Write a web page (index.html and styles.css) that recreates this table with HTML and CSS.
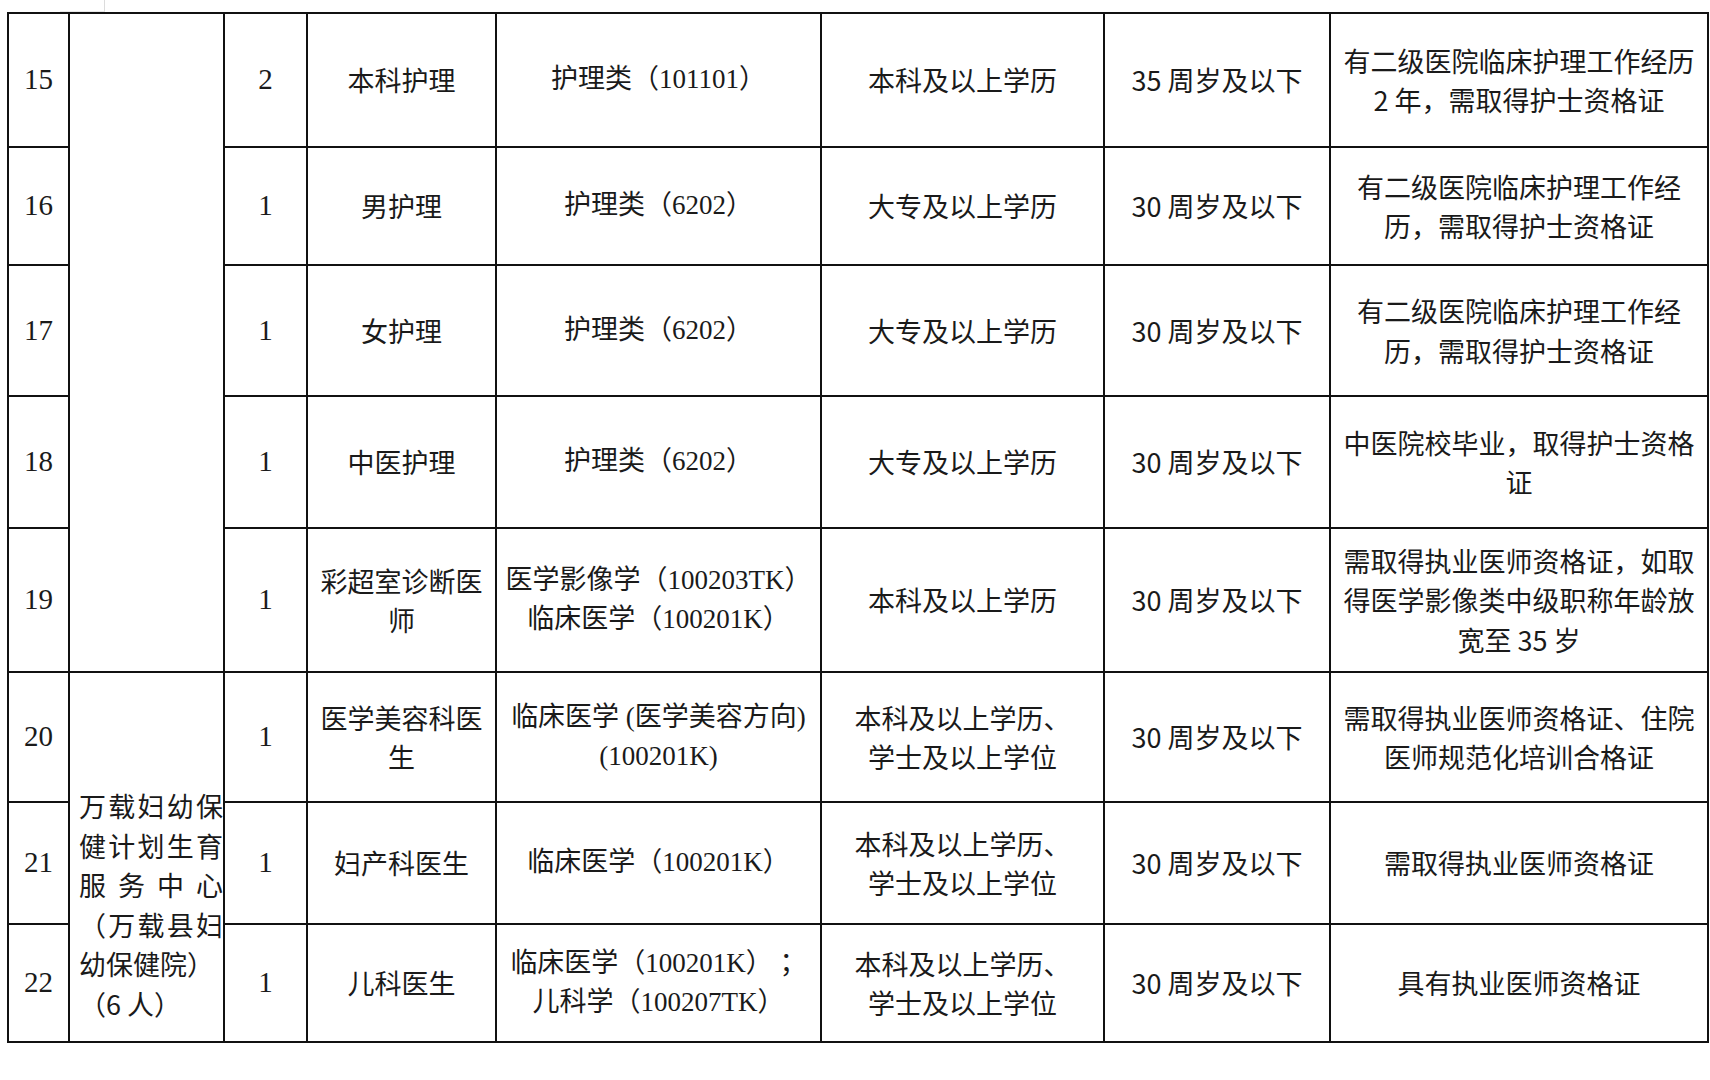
FILE: index.html
```html
<!DOCTYPE html>
<html lang="zh-CN">
<head>
<meta charset="utf-8">
<title>招聘岗位表</title>
<link rel="stylesheet" href="styles.css">
</head>
<body>
<div class="page">
  <div class="prev-corner"></div>
  <table class="grid">
    <colgroup>
      <col class="c-no">
      <col class="c-unit">
      <col class="c-count">
      <col class="c-post">
      <col class="c-major">
      <col class="c-edu">
      <col class="c-age">
      <col class="c-note">
    </colgroup>
    <tbody>
      <tr class="r15">
        <td class="num">15</td>
        <td class="unit-empty" rowspan="5"></td>
        <td class="num">2</td>
        <td>本科护理</td>
        <td class="major">护理类（101101）</td>
        <td>本科及以上学历</td>
        <td>35 周岁及以下</td>
        <td>有二级医院临床护理工作经历<br>2 年，需取得护士资格证</td>
      </tr>
      <tr class="r16">
        <td class="num">16</td>
        <td class="num">1</td>
        <td>男护理</td>
        <td class="major">护理类（6202）</td>
        <td>大专及以上学历</td>
        <td>30 周岁及以下</td>
        <td>有二级医院临床护理工作经<br>历，需取得护士资格证</td>
      </tr>
      <tr class="r17">
        <td class="num">17</td>
        <td class="num">1</td>
        <td>女护理</td>
        <td class="major">护理类（6202）</td>
        <td>大专及以上学历</td>
        <td>30 周岁及以下</td>
        <td>有二级医院临床护理工作经<br>历，需取得护士资格证</td>
      </tr>
      <tr class="r18">
        <td class="num">18</td>
        <td class="num">1</td>
        <td>中医护理</td>
        <td class="major">护理类（6202）</td>
        <td>大专及以上学历</td>
        <td>30 周岁及以下</td>
        <td>中医院校毕业，取得护士资格<br>证</td>
      </tr>
      <tr class="r19">
        <td class="num">19</td>
        <td class="num">1</td>
        <td>彩超室诊断医<br>师</td>
        <td class="major">医学影像学（100203TK）<br>临床医学（100201K）</td>
        <td>本科及以上学历</td>
        <td>30 周岁及以下</td>
        <td>需取得执业医师资格证，如取<br>得医学影像类中级职称年龄放<br>宽至 35 岁</td>
      </tr>
      <tr class="r20">
        <td class="num">20</td>
        <td class="unit" rowspan="3">
          <span class="line-just">万载妇幼保</span>
          <span class="line-just">健计划生育</span>
          <span class="line-just">服务中心</span>
          <span class="line-just">（万载县妇</span>
          <span class="line-left">幼保健院）</span>
          <span class="line-left">（6 人）</span>
        </td>
        <td class="num">1</td>
        <td>医学美容科医<br>生</td>
        <td class="major">临床医学 (医学美容方向)<br>(100201K)</td>
        <td>本科及以上学历、<br>学士及以上学位</td>
        <td>30 周岁及以下</td>
        <td>需取得执业医师资格证、住院<br>医师规范化培训合格证</td>
      </tr>
      <tr class="r21">
        <td class="num">21</td>
        <td class="num">1</td>
        <td>妇产科医生</td>
        <td class="major">临床医学（100201K）</td>
        <td>本科及以上学历、<br>学士及以上学位</td>
        <td>30 周岁及以下</td>
        <td>需取得执业医师资格证</td>
      </tr>
      <tr class="r22">
        <td class="num">22</td>
        <td class="num">1</td>
        <td>儿科医生</td>
        <td class="major">临床医学（100201K） ；<br>儿科学（100207TK）</td>
        <td>本科及以上学历、<br>学士及以上学位</td>
        <td>30 周岁及以下</td>
        <td>具有执业医师资格证</td>
      </tr>
    </tbody>
  </table>
</div>
</body>
</html>
```
FILE: styles.css
```css
html, body {
  margin: 0;
  padding: 0;
  background: #ffffff;
}

body {
  font-family: "Noto Sans CJK SC", sans-serif;
  color: #1a1a1a;
}

.page {
  padding-left: 7px;
}

.prev-corner {
  box-sizing: border-box;
  margin-left: 53px;
  width: 45px;
  height: 12px;
  border-right: 1px solid #dcdcdc;
  border-bottom: 1px solid #e8e8e8;
}

.grid {
  border-collapse: collapse;
  table-layout: fixed;
  width: 1702px;
}

.c-no { width: 61px; }
.c-unit { width: 155px; }
.c-count { width: 83px; }
.c-post { width: 189px; }
.c-major { width: 325px; }
.c-edu { width: 283px; }
.c-age { width: 226px; }
.c-note { width: 378px; }

.r15 { height: 134px; }
.r16 { height: 118px; }
.r17 { height: 131px; }
.r18 { height: 132px; }
.r19 { height: 144px; }
.r20 { height: 130px; }
.r21 { height: 122px; }
.r22 { height: 118px; }

.grid td {
  border: 2px solid #111111;
  padding: 0 4px;
  text-align: center;
  vertical-align: middle;
  font-size: 27px;
  line-height: 39.5px;
  white-space: nowrap;
}

.grid td.num,
.grid td.major {
  font-family: "Liberation Serif", "Noto Sans CJK SC", serif;
}

.grid td.num {
  font-size: 29px;
}

.grid td.unit {
  vertical-align: bottom;
  text-align: left;
  white-space: normal;
  padding: 0 0 18px 9px;
}

.line-just {
  display: block;
  text-align: justify;
  text-align-last: justify;
}

.line-left {
  display: block;
  text-align: left;
}
```
